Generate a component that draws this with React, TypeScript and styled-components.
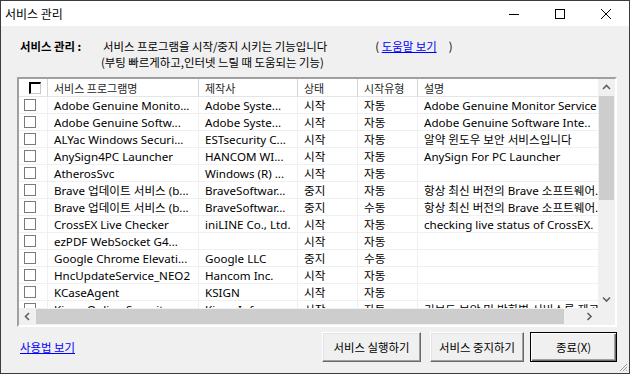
import React from 'react';
import styled, { createGlobalStyle } from 'styled-components';

const GlobalStyle = createGlobalStyle`
  html, body {
    margin: 0;
    padding: 0;
    background: #f0f0f0;
  }
  body {
    font-family: "Noto Sans", "Noto Sans CJK KR", sans-serif;
  }
  * {
    box-sizing: border-box;
  }
`;

type Row = [string, string, string, string, string];

const rows: Row[] = [
  ['Adobe Genuine Monito...', 'Adobe Syste...', '시작', '자동', 'Adobe Genuine Monitor Service'],
  ['Adobe Genuine Softw...', 'Adobe Syste...', '시작', '자동', 'Adobe Genuine Software Inte..'],
  ['ALYac Windows Securi...', 'ESTsecurity C...', '시작', '자동', '알약 윈도우 보안 서비스입니다'],
  ['AnySign4PC Launcher', 'HANCOM WI...', '시작', '자동', 'AnySign For PC Launcher'],
  ['AtherosSvc', 'Windows (R) ...', '시작', '자동', ''],
  ['Brave 업데이트 서비스 (b...', 'BraveSoftwar...', '중지', '자동', '항상 최신 버전의 Brave 소프트웨어..'],
  ['Brave 업데이트 서비스 (b...', 'BraveSoftwar...', '중지', '수동', '항상 최신 버전의 Brave 소프트웨어..'],
  ['CrossEX Live Checker', 'iniLINE Co., Ltd.', '시작', '자동', 'checking live status of CrossEX.'],
  ['ezPDF WebSocket G4...', '', '시작', '자동', ''],
  ['Google Chrome Elevati...', 'Google LLC', '중지', '수동', ''],
  ['HncUpdateService_NEO2', 'Hancom Inc.', '시작', '자동', ''],
  ['KCaseAgent', 'KSIGN', '시작', '자동', ''],
  ['Kings Online Security', 'Kings Informa...', '시작', '자동', '키보드 보안 및 방화벽 서비스를 제공'],
];

const COLUMNS = '29px 151px 99px 60px 60px 240px';

const Window = styled.div`
  position: relative;
  width: 630px;
  height: 374px;
  border: 1px solid #3c3c3c;
  background: #f0f0f0;
  display: flex;
  flex-direction: column;
  overflow: hidden;
`;

const TitleBar = styled.div`
  height: 25px;
  flex: none;
  background: #fff;
  display: flex;
  align-items: center;
`;

const Title = styled.div`
  flex: 1;
  padding-left: 4px;
  font: 12px "Noto Sans CJK KR", sans-serif;
  color: #000;
`;

const CaptionButton = styled.div`
  width: 46px;
  height: 25px;
  display: flex;
  align-items: center;
  justify-content: center;
`;

const Content = styled.div`
  flex: 1;
  display: flex;
  flex-direction: column;
  padding: 12px 12px 0 16px;
`;

const Intro = styled.div`
  display: grid;
  grid-template-columns: 83px auto;
  padding-left: 3px;
  font: 11.4px/16px "Noto Sans CJK KR", sans-serif;
  color: #000;
`;

const IntroLabel = styled.div`
  font-weight: bold;
`;

const IntroText = styled.div<{ $shift?: number }>`
  display: flex;
  margin-left: ${p => p.$shift ?? 0}px;
  white-space: nowrap;
`;

const HelpParen = styled.span<{ $gap: number }>`
  margin-left: ${p => p.$gap}px;
`;

const Link = styled.a`
  color: #0000ff;
  text-decoration: underline;
  cursor: pointer;
  font: 11.4px/16px "Noto Sans CJK KR", sans-serif;
`;

const Frame = styled.div`
  margin-top: 7px;
  height: 250px;
  border: 2px solid;
  border-color: #a0a0a0 #ffffff #ffffff #a0a0a0;
  box-shadow: inset 1px 1px 0 #696969;
  background: #fff;
  display: grid;
  grid-template-columns: 1fr 17px;
  grid-template-rows: 1fr 17px;
`;

const ListArea = styled.div`
  overflow: hidden;
  background: #fff;
`;

const GridRow = styled.div<{ $head?: boolean }>`
  display: grid;
  grid-template-columns: ${COLUMNS};
  height: ${p => (p.$head ? 18 : 17)}px;
  border-bottom: 1px solid ${p => (p.$head ? '#e5e5e5' : '#f0f0f0')};
  background: #fff;
`;

const Cell = styled.div<{ $head?: boolean }>`
  display: flex;
  align-items: center;
  padding-left: 6px;
  border-right: 1px solid ${p => (p.$head ? '#d5d5d5' : '#f0f0f0')};
  white-space: nowrap;
  overflow: hidden;
  font-size: ${p => (p.$head ? 11 : 11.6)}px;
  color: ${p => (p.$head ? '#1e1e1e' : '#000')};
  font-family: ${p => (p.$head ? '"Noto Sans CJK KR", sans-serif' : '"Noto Sans", "Noto Sans CJK KR", sans-serif')};
`;

const CheckCell = styled(Cell)`
  padding-left: ${p => (p.$head ? 10 : 5)}px;
`;

const Box = styled.span<{ $head?: boolean }>`
  display: block;
  width: 12px;
  height: 12px;
  background: #fff;
  border-style: solid;
  border-width: ${p => (p.$head ? '2px 1px 1px 2px' : '1px')};
  border-color: ${p => (p.$head ? '#000 #c8c8c8 #c8c8c8 #000' : '#7a7a7a')};
`;

const ScrollTrack = styled.div<{ $vertical?: boolean }>`
  background: #f0f0f0;
  display: flex;
  flex-direction: ${p => (p.$vertical ? 'column' : 'row')};
`;

const ArrowButton = styled.div`
  width: 17px;
  height: 17px;
  flex: none;
  display: flex;
  align-items: center;
  justify-content: center;
`;

const Thumb = styled.div<{ $vertical?: boolean; $size: number }>`
  flex: none;
  background: #cdcdcd;
  ${p =>
    p.$vertical
      ? `width: 15px; margin: 0 1px; height: ${p.$size}px;`
      : `height: 15px; margin: 1px 0; width: ${p.$size}px;`}
`;

const Spacer = styled.div`
  flex: 1;
`;

const Corner = styled.div`
  background: #f0f0f0;
`;

const Footer = styled.div`
  margin-top: 5px;
  height: 30px;
  display: flex;
  align-items: center;
  padding-left: 3px;
`;

const FooterButton = styled.button<{ $width: number; $default?: boolean; $gap: number }>`
  width: ${p => p.$width}px;
  height: 30px;
  margin-left: ${p => p.$gap}px;
  padding: 0;
  background: #f0f0f0;
  font: 11.4px "Noto Sans CJK KR", sans-serif;
  color: #000;
  border: 1px solid;
  border-color: ${p => (p.$default ? '#000' : '#fff #696969 #696969 #fff')};
  box-shadow: ${p =>
    p.$default
      ? 'inset 1px 1px 0 #fff, inset -1px -1px 0 #696969, inset -2px -2px 0 #a0a0a0'
      : 'inset -1px -1px 0 #a0a0a0, inset 1px 1px 0 #e3e3e3'};
`;

const Grip = styled.svg`
  position: absolute;
  right: 1px;
  bottom: 1px;
`;

const Chevron = ({ dir }: { dir: 'up' | 'down' | 'left' | 'right' }) => {
  const pts = {
    up: '1,5 4.5,1.5 8,5',
    down: '1,1.5 4.5,5 8,1.5',
    left: '5,1 1.5,4.5 5,8',
    right: '1.5,1 5,4.5 1.5,8',
  }[dir];
  const vertical = dir === 'up' || dir === 'down';
  return (
    <svg width={vertical ? 9 : 7} height={vertical ? 7 : 9}>
      <polyline points={pts} fill="none" stroke="#606060" strokeWidth="1.6" />
    </svg>
  );
};

const App = () => {
  return (
    <>
      <GlobalStyle />
      <Window>
        <TitleBar>
          <Title>서비스 관리</Title>
          <CaptionButton>
            <svg width="10" height="10">
              <line x1="0" y1="5.5" x2="10" y2="5.5" stroke="#000" strokeWidth="1" />
            </svg>
          </CaptionButton>
          <CaptionButton>
            <svg width="10" height="10">
              <rect x="0.5" y="0.5" width="9" height="9" fill="none" stroke="#000" strokeWidth="1" />
            </svg>
          </CaptionButton>
          <CaptionButton>
            <svg width="10" height="10">
              <path d="M0 0 L10 10 M10 0 L0 10" stroke="#000" strokeWidth="1" />
            </svg>
          </CaptionButton>
        </TitleBar>

        <Content>
          <Intro>
            <IntroLabel>서비스 관리 :</IntroLabel>
            <IntroText>
              서비스 프로그램을 시작/중지 시키는 기능입니다
              <HelpParen $gap={48}>(&nbsp;</HelpParen>
              <Link>도움말 보기</Link>
              <HelpParen $gap={12}>)</HelpParen>
            </IntroText>
            <span />
            <IntroText $shift={-2}>(부팅 빠르게하고,인터넷 느릴 때 도움되는 기능)</IntroText>
          </Intro>

          <Frame>
            <ListArea>
              <GridRow $head>
                <CheckCell $head>
                  <Box $head />
                </CheckCell>
                <Cell $head>서비스 프로그램명</Cell>
                <Cell $head>제작사</Cell>
                <Cell $head>상태</Cell>
                <Cell $head>시작유형</Cell>
                <Cell $head>설명</Cell>
              </GridRow>
              {rows.map((r, i) => (
                <GridRow key={i}>
                  <CheckCell>
                    <Box />
                  </CheckCell>
                  {r.map((c, j) => (
                    <Cell key={j}>{c}</Cell>
                  ))}
                </GridRow>
              ))}
            </ListArea>
            <ScrollTrack $vertical>
              <ArrowButton>
                <Chevron dir="up" />
              </ArrowButton>
              <Thumb $vertical $size={104} />
              <Spacer />
              <ArrowButton>
                <Chevron dir="down" />
              </ArrowButton>
            </ScrollTrack>
            <ScrollTrack>
              <ArrowButton>
                <Chevron dir="left" />
              </ArrowButton>
              <Thumb $size={528} />
              <Spacer />
              <ArrowButton>
                <Chevron dir="right" />
              </ArrowButton>
            </ScrollTrack>
            <Corner />
          </Frame>

          <Footer>
            <Link>사용법 보기</Link>
            <Spacer />
            <FooterButton $width={99} $gap={0}>서비스 실행하기</FooterButton>
            <FooterButton $width={94} $gap={9}>서비스 중지하기</FooterButton>
            <FooterButton $width={87} $gap={6} $default>
              종료(X)
            </FooterButton>
          </Footer>
        </Content>

        <Grip width="10" height="10">
          <path d="M9 2 L2 9 M9 5 L5 9 M9 8 L8 9" stroke="#9a9a9a" strokeWidth="1" />
        </Grip>
      </Window>
    </>
  );
};

export default App;
